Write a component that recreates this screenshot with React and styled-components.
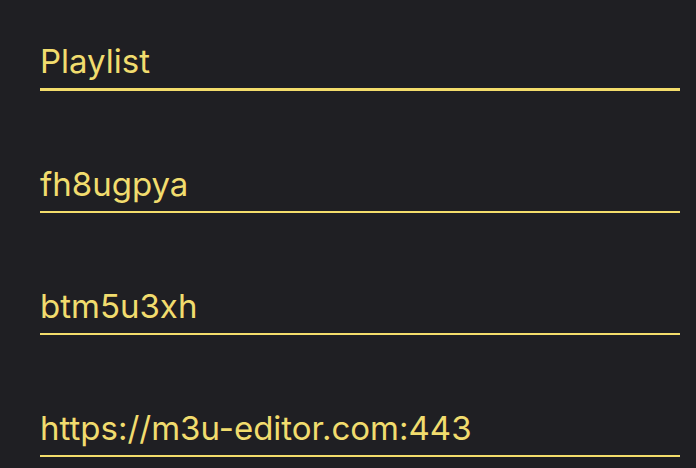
import React from "react";
import styled, { createGlobalStyle } from "styled-components";

const GlobalStyle = createGlobalStyle`
  html, body {
    margin: 0;
    padding: 0;
    background: #1f1f23;
  }
`;

const Page = styled.div`
  width: 696px;
  height: 468px;
  background: #1f1f23;
  box-sizing: border-box;
  padding: 41px 16px 0 40px;
  display: flex;
  flex-direction: column;
  gap: 73px;
  overflow: hidden;
`;

const Field = styled.div`
  padding-bottom: 7px;
  border-bottom: ${(p) => (p.$active ? "3px" : "2px")} solid #f3dc6b;
  font-family: Inter, Roboto, "Liberation Sans", sans-serif;
  font-size: 33px;
  line-height: 40px;
  color: #f1dc6e;
  white-space: nowrap;
`;

const fields = [
  { id: "name", value: "Playlist", active: true },
  { id: "user", value: "fh8ugpya" },
  { id: "pass", value: "btm5u3xh" },
  { id: "url", value: "https://m3u-editor.com:443" },
];

function App() {
  return (
    <>
      <GlobalStyle />
      <Page>
        {fields.map((f) => (
          <Field key={f.id} $active={f.active}>
            {f.value}
          </Field>
        ))}
      </Page>
    </>
  );
}

export default App;
